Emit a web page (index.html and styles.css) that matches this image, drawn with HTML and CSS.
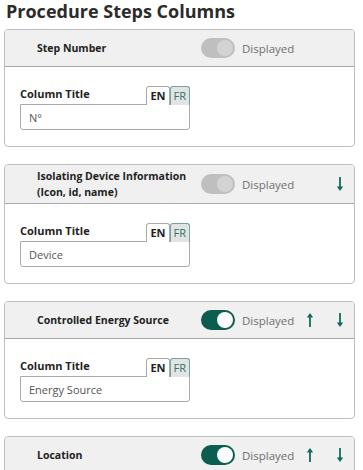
FILE: index.html
```html
<!DOCTYPE html>
<html lang="en">

<head>
  <meta charset="UTF-8" />
  <meta name="viewport" content="width=device-width, initial-scale=1.0" />
  <title>Procedure Steps Columns</title>
  <link rel="stylesheet" href="styles.css">
</head>

<body>
  <h1 class="page-title">Procedure Steps Columns</h1>

  <div class="column-card">
    <div class="card-head">
      <div class="col-name">Step Number</div>
      <span class="switch disabled"></span>
      <span class="switch-label">Displayed</span>
      <div class="move-btns"></div>
    </div>
    <div class="card-body">
      <div class="field-top">
        <label class="field-label">Column Title</label>
        <div class="lang-tabs">
          <span class="lang-tab active">EN</span>
          <span class="lang-tab">FR</span>
        </div>
      </div>
      <input class="field-input" type="text" value="N°">
    </div>
  </div>

  <div class="column-card">
    <div class="card-head">
      <div class="col-name">Isolating Device Information (Icon, id, name)</div>
      <span class="switch disabled"></span>
      <span class="switch-label">Displayed</span>
      <div class="move-btns">
        <span class="move-btn"></span>
        <span class="move-btn">
          <svg width="8" height="16" viewBox="0 0 8 16"><line x1="4" y1="1" x2="4" y2="12" stroke="#0f6b5d" stroke-width="1.8"/><polygon points="0.8,10.5 7.2,10.5 4,15" fill="#0f6b5d"/></svg>
        </span>
      </div>
    </div>
    <div class="card-body">
      <div class="field-top">
        <label class="field-label">Column Title</label>
        <div class="lang-tabs">
          <span class="lang-tab active">EN</span>
          <span class="lang-tab">FR</span>
        </div>
      </div>
      <input class="field-input" type="text" value="Device">
    </div>
  </div>

  <div class="column-card">
    <div class="card-head">
      <div class="col-name">Controlled Energy Source</div>
      <span class="switch on"></span>
      <span class="switch-label">Displayed</span>
      <div class="move-btns">
        <span class="move-btn">
          <svg width="8" height="16" viewBox="0 0 8 16"><line x1="4" y1="4" x2="4" y2="15" stroke="#0f6b5d" stroke-width="1.8"/><polygon points="0.8,5.5 7.2,5.5 4,1" fill="#0f6b5d"/></svg>
        </span>
        <span class="move-btn">
          <svg width="8" height="16" viewBox="0 0 8 16"><line x1="4" y1="1" x2="4" y2="12" stroke="#0f6b5d" stroke-width="1.8"/><polygon points="0.8,10.5 7.2,10.5 4,15" fill="#0f6b5d"/></svg>
        </span>
      </div>
    </div>
    <div class="card-body">
      <div class="field-top">
        <label class="field-label">Column Title</label>
        <div class="lang-tabs">
          <span class="lang-tab active">EN</span>
          <span class="lang-tab">FR</span>
        </div>
      </div>
      <input class="field-input" type="text" value="Energy Source">
    </div>
  </div>

  <div class="column-card">
    <div class="card-head">
      <div class="col-name">Location</div>
      <span class="switch on"></span>
      <span class="switch-label">Displayed</span>
      <div class="move-btns">
        <span class="move-btn">
          <svg width="8" height="16" viewBox="0 0 8 16"><line x1="4" y1="4" x2="4" y2="15" stroke="#0f6b5d" stroke-width="1.8"/><polygon points="0.8,5.5 7.2,5.5 4,1" fill="#0f6b5d"/></svg>
        </span>
        <span class="move-btn">
          <svg width="8" height="16" viewBox="0 0 8 16"><line x1="4" y1="1" x2="4" y2="12" stroke="#0f6b5d" stroke-width="1.8"/><polygon points="0.8,10.5 7.2,10.5 4,15" fill="#0f6b5d"/></svg>
        </span>
      </div>
    </div>
  </div>
</body>

</html>
```

FILE: styles.css
```css
body {
  margin: 0;
  padding: 0 8px 0 4px;
  font-family: "Open Sans", Arial, sans-serif;
  color: #222;
  background: white;
}

.page-title {
  margin: 0 0 7px 2px;
  font-size: 18px;
  line-height: 22px;
  font-weight: 700;
  color: #2b2b2b;
}

.column-card {
  border: 1px solid #bdbdbd;
  border-radius: 4px;
  margin-bottom: 17px;
  overflow: hidden;
}

.card-head {
  display: flex;
  align-items: center;
  min-height: 36px;
  padding: 0 0 0 32px;
  background: #f0f0f0;
  border-bottom: 1px solid #a8a8a8;
}

.col-name {
  width: 160px;
  margin-right: 4px;
  font-size: 10.5px;
  font-weight: 700;
  line-height: 16px;
  padding: 3px 0;
}

.switch {
  position: relative;
  width: 34px;
  height: 20px;
  border-radius: 10px;
  background: #bfbfbf;
  flex-shrink: 0;
}

.switch::after {
  content: "";
  position: absolute;
  top: 2px;
  left: 2px;
  width: 16px;
  height: 16px;
  border-radius: 50%;
  background: #d3d3d3;
}

.switch.disabled::after {
  left: 16px;
}

.switch.on {
  background: #0c5c50;
}

.switch.on::after {
  left: 16px;
  background: white;
}

.switch-label {
  margin-left: 7px;
  font-size: 11.5px;
  color: #6f6f6f;
}

.move-btns {
  display: flex;
  gap: 22px;
  margin-left: auto;
  padding-right: 10px;
}

.move-btn {
  width: 8px;
  height: 16px;
  display: flex;
}

.card-body {
  padding: 19px 15px 16px;
}

.field-top {
  display: flex;
  align-items: flex-end;
  width: 170px;
}

.field-label {
  font-size: 11px;
  font-weight: 700;
  color: #222;
  padding-bottom: 3px;
  flex: 1;
}

.lang-tabs {
  display: flex;
  margin-bottom: -1px;
}

.lang-tab {
  font-size: 11px;
  line-height: 18px;
  padding: 0 3px;
  border: 1px solid #aaa;
  border-bottom: none;
  border-radius: 3px 3px 0 0;
  font-weight: 700;
  background: white;
  color: #222;
}

.lang-tab + .lang-tab {
  font-weight: 400;
  background: #e3e3e3;
  color: #2a7669;
  border-color: #6fa79e;
}

.field-input {
  display: block;
  width: 170px;
  height: 26px;
  box-sizing: border-box;
  border: 1px solid #aaa;
  border-radius: 0 0 3px 3px;
  padding: 0 8px;
  font-family: "Open Sans", Arial, sans-serif;
  font-size: 11px;
  color: #555;
}
```
